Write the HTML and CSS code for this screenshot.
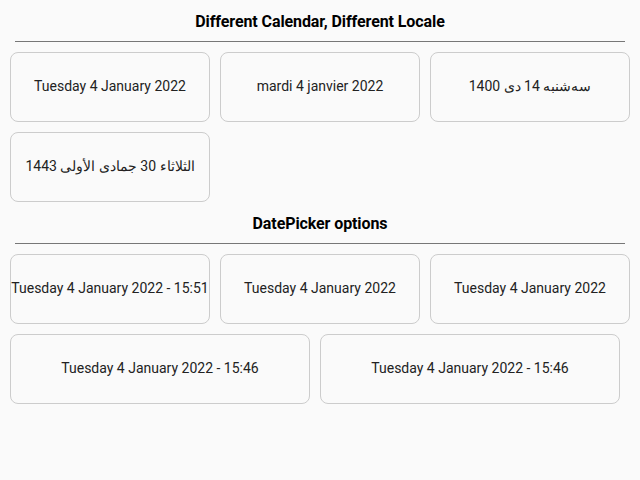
FILE: index.html
```html
<!DOCTYPE html>
<html>
<head>
<meta charset="utf-8">
<link rel="stylesheet" href="styles.css">
</head>
<body>
<section class="section">
  <h2 class="title">Different Calendar, Different Locale</h2>
  <hr class="rule">
  <div class="cards">
    <div class="card">Tuesday 4 January 2022</div>
    <div class="card">mardi 4 janvier 2022</div>
    <div class="card">سه‌شنبه 14 دی 1400</div>
    <div class="card">الثلاثاء 30 جمادى الأولى 1443</div>
  </div>
</section>
<section class="section">
  <h2 class="title">DatePicker options</h2>
  <hr class="rule">
  <div class="cards">
    <div class="card">Tuesday 4 January 2022 - 15:51</div>
    <div class="card">Tuesday 4 January 2022</div>
    <div class="card">Tuesday 4 January 2022</div>
    <div class="card wide">Tuesday 4 January 2022 - 15:46</div>
    <div class="card wide">Tuesday 4 January 2022 - 15:46</div>
  </div>
</section>
</body>
</html>
```
FILE: styles.css
```css
html, body {
  margin: 0;
  padding: 0;
  background: #fafafa;
  font-family: Roboto, "Noto Sans", sans-serif;
  color: #222;
}
.section {
  padding-top: 11px;
}
.title {
  margin: 0;
  font-size: 16px;
  font-weight: 700;
  letter-spacing: -0.1px;
  line-height: 21px;
  padding-bottom: 0;
  text-align: center;
  color: #000;
}
.rule {
  margin: 9px 15px 10px 15px;
  border: 0;
  height: 1px;
  background: #777;
}
.cards {
  display: flex;
  flex-wrap: wrap;
  gap: 10px;
  padding: 0 10px;
}
.card {
  box-sizing: border-box;
  width: 200px;
  height: 70px;
  padding-bottom: 2px;
  border: 1px solid #ccc;
  border-radius: 8px;
  display: flex;
  align-items: center;
  justify-content: center;
  font-size: 14px;
  white-space: nowrap;
  color: #222;
}
.wide {
  width: 300px;
}
```
